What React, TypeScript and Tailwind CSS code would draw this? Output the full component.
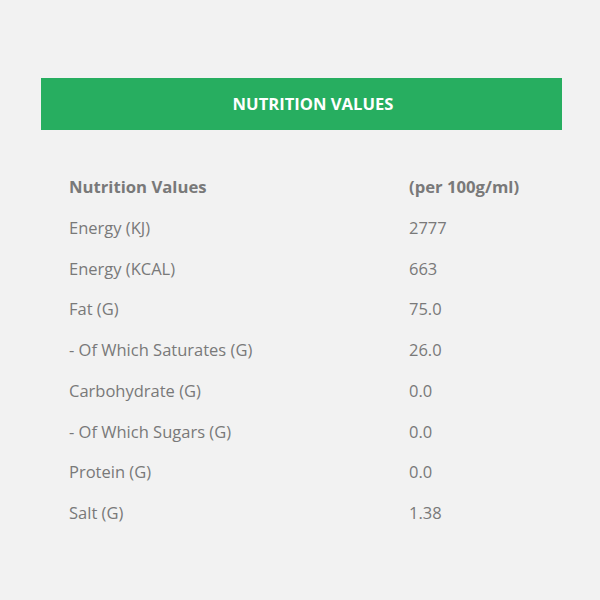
const rows: [string, string][] = [
  ["Energy (KJ)", "2777"],
  ["Energy (KCAL)", "663"],
  ["Fat (G)", "75.0"],
  ["- Of Which Saturates (G)", "26.0"],
  ["Carbohydrate (G)", "0.0"],
  ["- Of Which Sugars (G)", "0.0"],
  ["Protein (G)", "0.0"],
  ["Salt (G)", "1.38"],
];

export default function App() {
  return (
    <div className="min-h-[600px] w-[600px] bg-[#f2f2f2] pt-[78px] font-['Open_Sans',sans-serif]">
      <div className="ml-[41px] w-[521px]">
        <div className="flex h-[52px] items-center justify-center bg-[#27ae60] pl-[23px]">
          <h2 className="text-[16.6px] font-bold text-white">NUTRITION VALUES</h2>
        </div>
        <table className="mt-[37px] ml-[28px] w-[465px] text-left text-[16.5px] text-[#797979]">
          <thead>
            <tr>
              <th className="w-[340px] py-2 text-[16.7px] leading-[24.75px] font-bold">Nutrition Values</th>
              <th className="py-2 text-[16.7px] leading-[24.75px] font-bold">(per 100g/ml)</th>
            </tr>
          </thead>
          <tbody>
            {rows.map(([label, value]) => (
              <tr key={label}>
                <td className="py-2 leading-[24.75px]">{label}</td>
                <td className="py-2 leading-[24.75px]">{value}</td>
              </tr>
            ))}
          </tbody>
        </table>
      </div>
    </div>
  );
}
